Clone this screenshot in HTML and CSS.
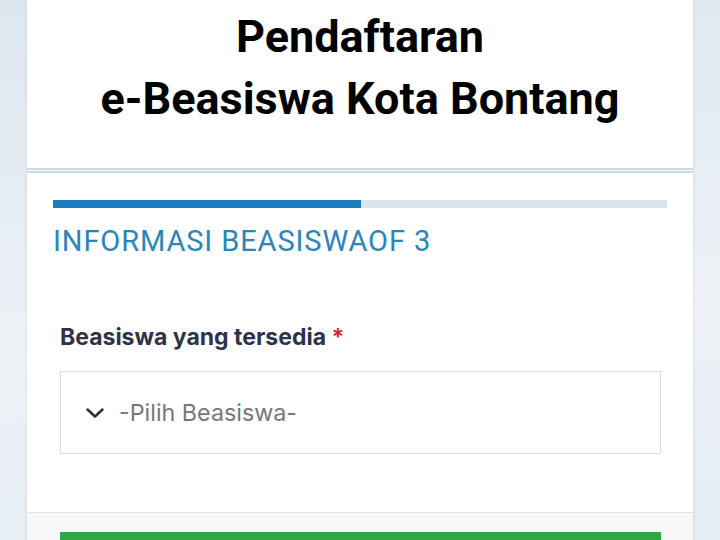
FILE: index.html
```html
<!DOCTYPE html>
<html lang="id">
<head>
<meta charset="utf-8">
<title>Pendaftaran e-Beasiswa Kota Bontang</title>
<link rel="stylesheet" href="styles.css">
</head>
<body>
<div class="page">
  <header class="head">
    <h1 class="title">Pendaftaran<br>e-Beasiswa Kota Bontang</h1>
  </header>
  <section class="card">
    <div class="card-body">
      <div class="progress"><div class="progress-fill" style="width:50.2%"></div></div>
      <h2 class="step">INFORMASI BEASISWAOF 3</h2>
      <div class="field">
        <label class="label">Beasiswa yang tersedia <span class="req">*</span></label>
        <div class="select">
          <svg class="chev" width="18" height="10" viewBox="0 0 18 10"><path d="M1.5 1.5 L9 8.5 L16.5 1.5" fill="none" stroke="#2b2b2b" stroke-width="2.4" stroke-linecap="round" stroke-linejoin="round"/></svg>
          <span class="placeholder">-Pilih Beasiswa-</span>
        </div>
      </div>
    </div>
    <div class="card-foot">
      <div class="btn"></div>
    </div>
  </section>
</div>
</body>
</html>
```
FILE: styles.css
```css
html, body {
  margin: 0;
  padding: 0;
}
body {
  height: 540px;
  overflow: hidden;
  background: linear-gradient(175deg, #dde7f0 0%, #e6edf4 35%, #eef2f7 60%, #e4ecf4 100%);
  font-family: "Roboto", "Liberation Sans", sans-serif;
}
.page {
  width: 666px;
  margin: 0 auto;
  box-shadow: 0 0 3px rgba(120, 140, 160, 0.25);
}
.head {
  background: #ffffff;
  padding: 6px 0 38px;
  border-bottom: 5px double #c9dde8;
}
.title {
  margin: 0;
  text-align: center;
  font-family: "Roboto", "Liberation Sans", sans-serif;
  font-weight: 700;
  font-size: 45px;
  line-height: 62px;
  color: #000000;
}
.card {
  background: #ffffff;
}
.card-body {
  padding: 27px 26px 58px;
}
.progress {
  height: 8px;
  background: #dce4eb;
}
.progress-fill {
  height: 100%;
  background: #1c7dbf;
}
.step {
  margin: 15px 0 0;
  font-family: "Roboto", "Liberation Sans", sans-serif;
  font-weight: 400;
  font-size: 29px;
  line-height: 36px;
  letter-spacing: 0.9px;
  color: #2a86ba;
}
.field {
  margin: 64px 6px 0 7px;
}
.label {
  display: block;
  font-family: "Inter", "Roboto", sans-serif;
  font-weight: 700;
  font-size: 23px;
  line-height: 28px;
  color: #2c3349;
}
.req {
  color: #d6293a;
}
.select {
  margin-top: 20px;
  height: 81px;
  border: 1px solid #dadada;
  display: flex;
  align-items: center;
  gap: 15px;
  padding-left: 25px;
}
.chev {
  flex: none;
}
.placeholder {
  font-family: "Inter", "Roboto", sans-serif;
  font-size: 23.3px;
  color: #777777;
}
.card-foot {
  background: #f7f7f7;
  border-top: 1px solid #e2e2e2;
  padding: 19px 32px 40px 33px;
}
.btn {
  height: 44px;
  background: #2ea745;
}
```
